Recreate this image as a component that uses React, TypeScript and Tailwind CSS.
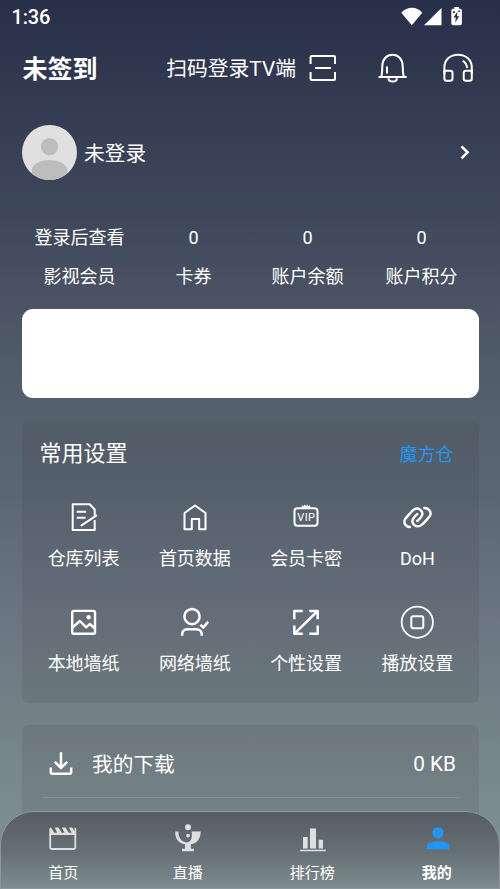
import React from 'react';

const ListIcon = (): React.ReactElement => (
  <svg width="36" height="36" viewBox="0 0 36 36" fill="none" stroke="white" strokeWidth="2" strokeLinejoin="round">
    <path d="M28.7 16.5V10.5L23.7 5.3H6.7V31H28.7V21" />
    <path d="M10.7 12.7H20M10.7 18.7H19.5M14.8 26.8L31 16.2" />
  </svg>
);

const HouseIcon = (): React.ReactElement => (
  <svg width="36" height="36" viewBox="0 0 36 36" fill="none" stroke="white" strokeWidth="2" strokeLinejoin="round">
    <path d="M7.5 30.3V14L18 6.5L28.5 14V30.3H22.2V20H14.8V30.3Z" />
  </svg>
);

const VipIcon = (): React.ReactElement => (
  <svg width="36" height="36" viewBox="0 0 36 36" fill="none" stroke="white" strokeWidth="2">
    <rect x="6.5" y="9.2" width="23" height="17.6" rx="3" />
    <path d="M13.5 8.6L14 6.2L15.8 7.3L16.5 5.6L18 7L19.5 5.6L20.2 7.3L22 6.2L22.5 8.6Z" fill="white" stroke="none" />
    <text x="18.4" y="22.2" textAnchor="middle" fontSize="11" letterSpacing="0.4" fill="white" stroke="none">
      VIP
    </text>
  </svg>
);

const LinkIcon = (): React.ReactElement => (
  <svg width="36" height="36" viewBox="0 0 36 36" fill="none" stroke="white" strokeWidth="2.4" strokeLinecap="round">
    <path d="M11 28C7 28 4.3 24.3 5.8 20.8C6.3 19.5 12.7 12.3 14.2 11.1C19 7.3 25 11.8 22.8 16.8C22 18.5 19.5 21.1 18.3 22" />
    <path d="M25.3 9C30 9 32.7 13 31 16.7C30.2 18.2 24.5 24.5 22.6 25.9C17.5 29.7 11.7 25 14 20.1C14.8 18.3 16.8 16.3 18.2 15.1" />
  </svg>
);

const ImageIcon = (): React.ReactElement => (
  <svg width="36" height="36" viewBox="0 0 36 36" fill="none" stroke="white" strokeWidth="2.4" strokeLinejoin="round">
    <rect x="6.2" y="6.9" width="22.8" height="22.8" rx="1.5" />
    <path d="M6.5 23.5L13.9 17L20.2 23.3L23.7 20L29 24.5" />
    <circle cx="22.6" cy="13.2" r="2.2" fill="white" stroke="none" />
  </svg>
);

const UserCheckIcon = (): React.ReactElement => (
  <svg width="36" height="36" viewBox="0 0 36 36" fill="none" stroke="white" strokeWidth="2.5">
    <circle cx="15" cy="12.6" r="7.6" />
    <path d="M5.2 31.8V30.3C5.2 27.3 7.2 25.2 10.2 25.2H19.5C22.5 25.2 24.7 27.3 24.7 30.3V31.8" />
    <path d="M23.4 20.7L26.4 23.4L31.2 17.7" />
  </svg>
);

const ExpandIcon = (): React.ReactElement => (
  <svg width="36" height="36" viewBox="0 0 36 36" fill="none" stroke="white" strokeWidth="2.5" strokeLinejoin="round">
    <path d="M6.3 15.3V7H14.8M21.3 7H29.7V15.3M29.7 21.6V29.8H21.3M14.8 29.8H6.3V21.6M7 29.1L29 7.7" />
  </svg>
);

const PlayIcon = (): React.ReactElement => (
  <svg width="36" height="36" viewBox="0 0 36 36" fill="none" stroke="white" strokeWidth="1.8">
    <circle cx="18.3" cy="18.2" r="15.6" />
    <rect x="12.3" y="12.2" width="12" height="12" rx="2" strokeWidth="2" />
  </svg>
);

const stats = [
  { value: '登录后查看', label: '影视会员' },
  { value: '0', label: '卡券' },
  { value: '0', label: '账户余额' },
  { value: '0', label: '账户积分' },
];

const settings = [
  { label: '仓库列表', icon: <ListIcon /> },
  { label: '首页数据', icon: <HouseIcon /> },
  { label: '会员卡密', icon: <VipIcon /> },
  { label: 'DoH', icon: <LinkIcon /> },
  { label: '本地墙纸', icon: <ImageIcon /> },
  { label: '网络墙纸', icon: <UserCheckIcon /> },
  { label: '个性设置', icon: <ExpandIcon /> },
  { label: '播放设置', icon: <PlayIcon /> },
];

const tabs = [
  {
    label: '首页',
    icon: (
      <svg width="32" height="32" viewBox="0 0 32 32">
        <path d="M3.2 11V24.5Q3.2 26 4.7 26H26.8Q28.3 26 28.3 24.5V11" fill="none" stroke="#dedfe0" strokeWidth="1.8" />
        <path d="M2.3 12V6.2Q2.3 4.6 4 4.6L7.3 9.8H10.3L7.7 4.6H11.5L14.7 9.8H17.7L14.7 4.6H18.5L21.7 9.8H24.7L21.9 4.6H25.3L27.5 8.5V4.6Q29.2 4.6 29.2 6.2V12Z" fill="#dedfe0" />
      </svg>
    ),
  },
  {
    label: '直播',
    icon: (
      <svg width="32" height="32" viewBox="0 0 32 32" fill="#dedfe0">
        <circle cx="16" cy="4.3" r="3" />
        <circle cx="16" cy="12.6" r="1.9" />
        <path d="M3.2 8.6H6.5C6 14.5 9.7 19.4 14.7 19.4C19.7 19.4 20.5 14 19.5 8.6H28.7C28.7 16 24.7 20.7 18.9 21.3V25.7H21.9V28.2H10V25.7H13V21.3C6.7 20.7 2.9 15.5 3.2 8.6Z" />
      </svg>
    ),
  },
  {
    label: '排行榜',
    icon: (
      <svg width="32" height="32" viewBox="0 0 32 32" fill="#dedfe0">
        <path d="M7 14H11.7V25.5H7ZM14 5.5H20V25.5H14ZM22.7 16.8H27V25.5H22.7ZM4.2 26.7H29.8V28.3H4.2Z" />
      </svg>
    ),
  },
  {
    label: '我的',
    active: true,
    icon: (
      <svg width="32" height="32" viewBox="0 0 32 32" fill="#2196f3">
        <circle cx="17" cy="9.8" r="5.6" />
        <path d="M5.7 26.3V23.5C5.7 20 12.2 18.3 17.2 18.3C22.2 18.3 28.6 20 28.6 23.5V26.3Z" />
      </svg>
    ),
  },
];

const StatusBar = (): React.ReactElement => (
  <div className="flex h-[34px] items-center justify-between pl-[11.5px] pr-[37px]">
    <span className="text-[20px] font-medium leading-[34px] tracking-[-0.2px]">1:36</span>
    <svg width="62" height="20" viewBox="0 0 62 20" fill="white">
      <path d="M0.3 5.7C6.3 -0.8 15.5 -0.8 21.2 5.7L10.8 18.2Z" />
      <path d="M40.5 1V18.2H23Z" />
      <path d="M53.3 1.8V0H57.9V1.8H59.2Q60.9 1.8 60.9 3.5V16.5Q60.9 18.2 59.2 18.2H52Q50.3 18.2 50.3 16.5V3.5Q50.3 1.8 52 1.8Z" />
      <path d="M56.5 4.5L52.4 10.4H54.8L54.2 15.5L58.3 9.2H56Z" fill="#2b324b" />
      <path d="M52 4.2H54V6H52ZM57.3 3.5H59V5H57.3Z" fill="#2b324b" />
    </svg>
  </div>
);

const Header = (): React.ReactElement => (
  <div className="flex h-[68px] items-center pl-[22.5px] pr-[26px]">
    <h1 className="pt-[3px] text-[25px] font-bold leading-[68px]">未签到</h1>
    <div className="ml-auto flex items-center">
      <span className="pt-[3px] text-[20.8px]">扫码登录TV端</span>
      <svg className="ml-[12px]" width="30" height="30" viewBox="0 0 30 30" fill="none" stroke="white" strokeWidth="2">
        <path d="M2.6 11V4Q2.6 3 3.6 3H26Q27 3 27 4V11M2.6 19V26Q2.6 27 3.6 27H26Q27 27 27 26V19M7 15H23" />
      </svg>
      <svg className="ml-[38px]" width="34" height="34" viewBox="0 0 34 34" fill="none" stroke="white" strokeWidth="2">
        <path d="M5.4 26.2C6.2 22 6.3 19 6.3 15C6.3 8.5 10.5 3.8 16.5 3.8C22.5 3.8 26.7 8.5 26.7 15C26.7 19 26.9 22 27.8 26.2" />
        <path d="M2.5 26.1H30.7M11 15.5V22.5M12.5 27.2C12.5 29.2 14.2 30.5 16.7 30.5C19.2 30.5 20.9 29.2 20.9 27.2" />
      </svg>
      <svg className="ml-[32px]" width="32" height="32" viewBox="0 0 32 32" fill="none" stroke="white" strokeWidth="2">
        <path d="M2.4 22V15.5C2.4 8 8 2.8 16 2.8C24 2.8 29.8 8 29.8 15.5V22" />
        <path d="M2.4 26.8V18.8H8.2Q10.5 18.8 10.5 21V26.6Q10.5 28.8 8.2 28.8H4.4Q2.4 28.8 2.4 26.8ZM29.8 26.8V18.8H24Q21.7 18.8 21.7 21V26.6Q21.7 28.8 24 28.8H27.8Q29.8 28.8 29.8 26.8Z" />
        <path d="M20.7 8.9C23.3 10.3 24.7 12.6 25.2 16" />
      </svg>
    </div>
  </div>
);

const TabBar = (): React.ReactElement => (
  <nav className="absolute inset-x-0 bottom-0 grid h-[78px] grid-cols-4 rounded-t-[34px] border border-[#8b979b] bg-linear-to-b from-[#575d65] via-[#646f73] to-[#7d8b8e]">
    {tabs.map((tab) => (
      <div key={tab.label} className="flex flex-col items-center pt-[11px]">
        {tab.icon}
        <span className={tab.active ? 'mt-[7px] text-[15px] leading-[22px] font-bold' : 'mt-[7px] text-[15px] leading-[22px]'}>
          {tab.label}
        </span>
      </div>
    ))}
  </nav>
);

const App: React.FC = (): React.ReactElement => {
  return (
    <div className="relative h-[889px] w-[500px] overflow-hidden bg-[linear-gradient(180deg,#282f49_0px,#343c53_110px,#3e485a_220px,#485062_280px,#53606b_395px,#5a6674_490px,#67727f_590px,#727f87_700px,#7e8d93_830px,#819194_889px)] font-['Roboto','Noto_Sans_CJK_SC',sans-serif] text-white">
      <StatusBar />
      <Header />

      <div className="mt-[16px] flex h-[68px] items-center pl-[22px] pr-[26px]">
        <svg width="55" height="55" viewBox="0 0 54 54">
          <defs>
            <clipPath id="avatar">
              <circle cx="27" cy="27" r="27" />
            </clipPath>
          </defs>
          <g clipPath="url(#avatar)">
            <rect width="54" height="54" fill="#e0e0e0" />
            <circle cx="27" cy="21.3" r="8.5" fill="#bdbdbd" />
            <path d="M9.7 54V43C12 37.5 19 34.4 27 34.4C35.2 34.4 42.2 37.5 44.5 43V54Z" fill="#bdbdbd" />
          </g>
        </svg>
        <span className="ml-[7px] pt-[5px] text-[20.7px]">未登录</span>
        <svg className="ml-auto" width="18" height="18" viewBox="0 0 18 18" fill="none" stroke="white" strokeWidth="2.6">
          <path d="M5.5 3.3L11.5 9.3L5.5 15.3" />
        </svg>
      </div>

      <div className="ml-[22.5px] mr-[21.5px] mt-[33px] grid grid-cols-4 text-center text-[18px]">
        {stats.map((stat) => (
          <div key={stat.label} className="flex flex-col">
            <span className="h-[38px] leading-[38px]">{stat.value}</span>
            <span className="h-[38px] leading-[39px]">{stat.label}</span>
          </div>
        ))}
      </div>

      <div className="mx-[22px] mt-[14px] h-[89px] w-[457px] rounded-[11px] bg-white" />

      <section className="mx-[22px] mt-[22px] h-[283px] w-[457px] rounded-[7px] bg-[#303030]/10 px-[6px]">
        <div className="flex h-[66px] items-center justify-between pl-[11.5px] pr-[19.5px]">
          <h2 className="text-[22px]">常用设置</h2>
          <span className="pt-[3px] text-[18px] text-[#2196f3]">魔方仓</span>
        </div>
        <div className="grid grid-cols-4">
          {settings.map((item) => (
            <div key={item.label} className="flex h-[105px] flex-col items-center pt-[13px]">
              {item.icon}
              <span className="mt-[10px] text-[18px] leading-[28px]">{item.label}</span>
            </div>
          ))}
        </div>
      </section>

      <section className="mx-[22px] mt-[22px] h-[164px] w-[457px] rounded-[7px] bg-[#303030]/10 px-[20px]">
        <div className="flex h-[73px] items-center border-b border-[#808e95] pl-[6px] pr-[3px] pt-[5px] text-[20.7px]">
          <svg width="26" height="26" viewBox="0 0 26 26" fill="none" stroke="white" strokeWidth="2.5">
            <path d="M13 1.2V17M6.8 10.8L13 17L19.2 10.8M2.8 16.5V21Q2.8 22.8 4.6 22.8H21.4Q23.2 22.8 23.2 21V16.5" />
          </svg>
          <span className="ml-[18px] pt-[4px]">我的下载</span>
          <span className="ml-auto pt-[2px]">0 KB</span>
        </div>
      </section>

      <TabBar />
    </div>
  );
};

export default App;
